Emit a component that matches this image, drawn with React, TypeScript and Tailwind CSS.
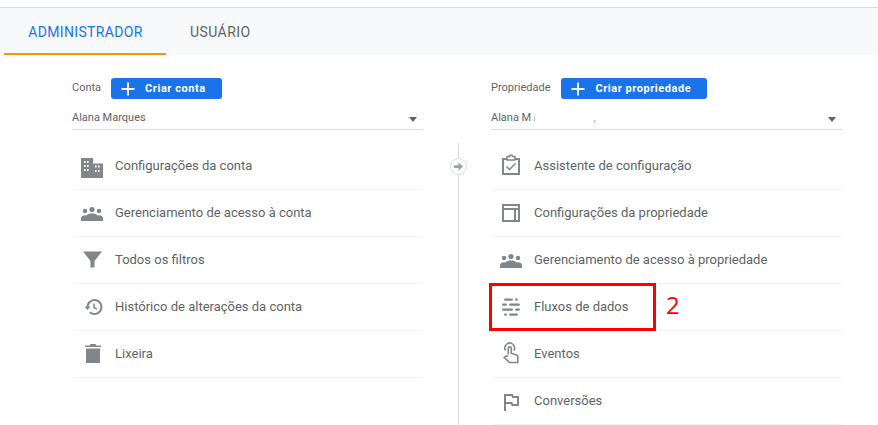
import React from "react";

const Grey = "#80868b";

const ic = {
  building: (
    <svg width="24" height="24" viewBox="0 0 24 24" fill={Grey}>
      <path fillRule="evenodd" d="M1 4h12v5.500h10V24H1zM4 7v2h1.600V7zm3 0v2h1.600V7zM4 11v2h1.600v-2zm3 0v2h1.600v-2zM4 15v2h1.600v-2zm3 0v2h1.600v-2zm8-3.500v2h1.600v-2zm3 0v2h1.600v-2zM15 16v2h1.600v-2zm3 0v2h1.600v-2z" />
    </svg>
  ),
  people: (
    <svg width="24" height="24" viewBox="0 0 24 24" fill={Grey}>
      <circle cx="12" cy="8.500" r="2.600" />
      <circle cx="5" cy="10" r="2.200" />
      <circle cx="19" cy="10" r="2.200" />
      <path d="M1 20v-2.500c0-2 2-3.200 4-3.200.6 0 1.100.1 1.500.2C7.500 13 9.700 12.500 12 12.500s4.500.5 5.500 2c.4-.1.900-.2 1.500-.2 2 0 4 1.200 4 3.200V20z" />
    </svg>
  ),
  filter: (
    <svg width="24" height="24" viewBox="0 0 24 24" fill={Grey}>
      <path d="M3 3.500h19L14.500 13v6.500h-4V13z" />
    </svg>
  ),
  history: (
    <svg width="24" height="24" viewBox="0 0 24 24" fill="none" stroke={Grey}>
      <path strokeWidth="2" d="M7.500 12a7 7 0 1 1 2.300 5.200" />
      <path fill={Grey} stroke="none" d="M4.500 11.500h6L7.500 15z" />
      <path strokeWidth="1.500" d="M14 8.500v4l3 1.600" />
    </svg>
  ),
  trash: (
    <svg width="24" height="24" viewBox="0 0 24 24" fill={Grey}>
      <path d="M5 5h16V3.500h-4.500l-1-1.500h-5l-1 1.500H5zM6 6.500h14V21H6z" />
    </svg>
  ),
  clipboard: (
    <svg width="24" height="24" viewBox="0 0 24 24" fill="none" stroke={Grey} strokeWidth="2">
      <path d="M8 5H4v15h16V5h-4" />
      <path d="M8 2.500h2.500a1.500 1.500 0 0 1 3 0H16V6H8z" strokeWidth="1.500" />
      <path d="M7.500 12.500l3 3 6-6" strokeWidth="1.500" />
    </svg>
  ),
  layout: (
    <svg width="24" height="24" viewBox="0 0 24 24" fill="none" stroke={Grey} strokeWidth="2">
      <path d="M4 4h16v16H4zM4 8h16M16 8v12" />
    </svg>
  ),
  streams: (
    <svg width="24" height="24" viewBox="0 0 24 24" fill={Grey}>
      <rect x="5" y="3.500" width="9" height="2.200" rx="1.100" />
      <rect x="16" y="3.500" width="3" height="2.200" rx="1.100" />
      <rect x="3" y="8.500" width="5" height="2.200" rx="1.100" />
      <rect x="10" y="8.500" width="11" height="2.200" rx="1.100" />
      <rect x="3" y="13.500" width="11" height="2.200" rx="1.100" />
      <rect x="16" y="13.500" width="5" height="2.200" rx="1.100" />
      <rect x="5" y="18.500" width="3" height="2.200" rx="1.100" />
      <rect x="10" y="18.500" width="9" height="2.200" rx="1.100" />
    </svg>
  ),
  touch: (
    <svg width="24" height="24" viewBox="0 0 24 24" fill="none" stroke={Grey}>
      <path strokeWidth="1.600" d="M6.700 8.500a4.800 4.800 0 1 1 8 0" />
      <path strokeWidth="1.600" d="M9.300 12.500V6.300a1.500 1.500 0 0 1 3 0v5.200l4.800 1.200c1.100.3 1.700 1 1.700 2.100v5.700h-8.300L5.200 15.500l1-1c.6-.5 1.400-.5 3.100-.2" />
    </svg>
  ),
  flag: (
    <svg width="24" height="24" viewBox="0 0 24 24" fill="none" stroke={Grey} strokeWidth="2">
      <path d="M6 22V6h7l1 2h5v8h-5.500l-1-2H6" />
    </svg>
  ),
};

function Row({ icon, label }: { icon: React.ReactNode; label: string }) {
  return (
    <div className="flex h-[47px] items-center border-b border-[#f1f3f4]">
      <div className="flex w-[41px] justify-start pl-[6px]">{icon}</div>
      <span className="text-[13px] text-[#5f6368]">{label}</span>
    </div>
  );
}

function Head({ label, button, value, gap }: { label: string; button: string; value: React.ReactNode; gap: string }) {
  return (
    <div>
      <div className={`flex h-[21px] items-center ${gap}`}>
        <span className="text-[11px] text-[#5f6368]">{label}</span>
        <div className="flex h-[21px] items-center rounded-[3px] bg-[#1a73e8] pl-[10px] pr-[16px]">
          <svg width="14" height="14" viewBox="0 0 14 14" stroke="#fff" strokeWidth="1.800">
            <path d="M7 0.500v13M0.500 7h13" />
          </svg>
          <span className="ml-[10px] pt-px text-[11px] font-bold tracking-[0.55px] text-white">{button}</span>
        </div>
      </div>
      <div className="mt-[7px] flex h-[24px] items-center justify-between border-b border-[#dadce0] pt-[2px]">
        <span className="text-[11px] text-[#5f6368]">{value}</span>
        <span className="mr-[6px] mt-px h-0 w-0 border-x-[4px] border-t-[5px] border-x-transparent border-t-[#5f6368]" />
      </div>
    </div>
  );
}

export default function App() {
  return (
    <div className="relative h-[425px] w-[878px] overflow-hidden bg-white" style={{ fontFamily: "Roboto, sans-serif" }}>
      <div className="h-[7px]" />
      <div className="flex h-[48px] border-t border-[#dadce0] bg-[#f8f9fa] pl-[4px]">
        <div className="flex h-[47px] w-[162px] items-center justify-center border-b-2 border-[#f29900] pl-[1px] pt-[4px] text-[14px] tracking-[0.34px] text-[#1a73e8]">
          ADMINISTRADOR
        </div>
        <div className="flex h-[47px] items-center pl-[24px] pt-[2px] text-[14px] tracking-[0.42px] text-[#5f6368]">USUÁRIO</div>
      </div>
      <div className="flex pl-[72px] pt-[23px]">
        <div className="w-[351px]">
          <Head label="Conta" button="Criar conta" value="Alana Marques" gap="gap-[10px]" />
          <div className="ml-[2px] mt-[13px]">
            <Row icon={ic.building} label="Configurações da conta" />
            <Row icon={ic.people} label="Gerenciamento de acesso à conta" />
            <Row icon={ic.filter} label="Todos os filtros" />
            <Row icon={ic.history} label="Histórico de alterações da conta" />
            <Row icon={ic.trash} label="Lixeira" />
          </div>
        </div>
        <div className="relative w-[68px]">
          <div className="absolute left-[35px] top-[65px] h-[300px] w-px bg-[#dadce0]" />
          <div className="absolute left-[27px] top-[80px] flex h-[17px] w-[17px] items-center justify-center rounded-full border border-[#dadce0] bg-white">
            <svg width="11" height="11" viewBox="0 0 12 12" fill="#9aa0a6">
              <path d="M1 4.500h5V1.500L11 6l-5 4.500v-3H1z" />
            </svg>
          </div>
        </div>
        <div className="w-[351px]">
          <Head
            label="Propriedade"
            button="Criar propriedade"
            value={
              <span className="flex items-center">
                <span>Alana M</span>
                <span className="ml-[3px] h-[7px] w-[2px] rounded-l-full border-l border-[#c4c7cc]" />
                <span className="ml-[58px] mt-[5px] h-[3px] w-px rotate-[25deg] bg-[#9aa0a6]" />
              </span>
            }
            gap="gap-[11px]"
          />
          <div className="ml-[2px] mt-[13px]">
            <Row icon={ic.clipboard} label="Assistente de configuração" />
            <Row icon={ic.layout} label="Configurações da propriedade" />
            <Row icon={ic.people} label="Gerenciamento de acesso à propriedade" />
            <Row icon={ic.streams} label="Fluxos de dados" />
            <Row icon={ic.touch} label="Eventos" />
            <Row icon={ic.flag} label="Conversões" />
          </div>
        </div>
      </div>
      <div className="absolute left-[489px] top-[283px] h-[48px] w-[167px] border-[3px] border-[#ff0000]" />
      <div className="absolute left-[666px] top-[289px] text-[24px] leading-[32px] text-[#ff0000]" style={{ fontFamily: "'Open Sans', sans-serif" }}>
        2
      </div>
    </div>
  );
}
